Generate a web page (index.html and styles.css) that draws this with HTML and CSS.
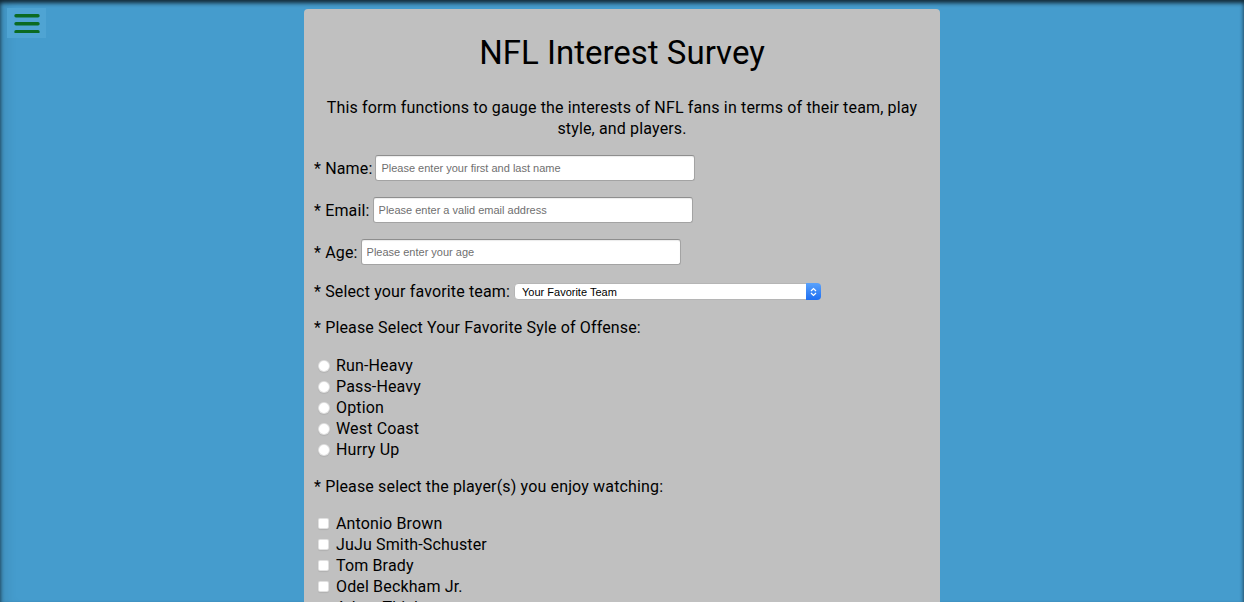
FILE: index.html
```html
<!DOCTYPE html>
<html lang="en">
<head>
<meta charset="utf-8">
<title>NFL Interest Survey</title>
<link rel="stylesheet" href="styles.css">
</head>
<body>
<button class="menu-btn" aria-label="Menu">
  <svg width="26" height="20" viewBox="0 0 26 20">
    <path d="M2 2.7H24M2 10.7H24M2 18.7H24" stroke="#0b6a22" stroke-width="3.4" stroke-linecap="round"/>
  </svg>
</button>
<main class="card">
  <h1 class="title">NFL Interest Survey</h1>
  <p class="desc">This form functions to gauge the interests of NFL fans in terms of their team, play style, and players.</p>
  <form class="survey">
    <div class="row"><label for="name">* Name:</label><input class="text-input" id="name" type="text" placeholder="Please enter your first and last name"></div>
    <div class="row"><label for="email">* Email:</label><input class="text-input" id="email" type="email" placeholder="Please enter a valid email address"></div>
    <div class="row"><label for="age">* Age:</label><input class="text-input" id="age" type="number" placeholder="Please enter your age"></div>
    <div class="row row-select"><label for="team">* Select your favorite team:</label>
      <span class="select-wrap">
        <select id="team" class="select"><option>Your Favorite Team</option></select>
        <span class="select-arrow"><svg width="7" height="10" viewBox="0 0 7 10"><path d="M1 4L3.5 1.5L6 4M1 6L3.5 8.5L6 6" fill="none" stroke="#fff" stroke-width="1.2"/></svg></span>
      </span>
    </div>
    <p class="question">* Please Select Your Favorite Syle of Offense:</p>
    <ul class="options">
      <li><input class="radio" type="radio" name="offense" id="o1"><label for="o1">Run-Heavy</label></li>
      <li><input class="radio" type="radio" name="offense" id="o2"><label for="o2">Pass-Heavy</label></li>
      <li><input class="radio" type="radio" name="offense" id="o3"><label for="o3">Option</label></li>
      <li><input class="radio" type="radio" name="offense" id="o4"><label for="o4">West Coast</label></li>
      <li><input class="radio" type="radio" name="offense" id="o5"><label for="o5">Hurry Up</label></li>
    </ul>
    <p class="question question-players">* Please select the player(s) you enjoy watching:</p>
    <ul class="options options-players">
      <li><input class="check" type="checkbox" id="p1"><label for="p1">Antonio Brown</label></li>
      <li><input class="check" type="checkbox" id="p2"><label for="p2">JuJu Smith-Schuster</label></li>
      <li><input class="check" type="checkbox" id="p3"><label for="p3">Tom Brady</label></li>
      <li><input class="check" type="checkbox" id="p4"><label for="p4">Odel Beckham Jr.</label></li>
      <li><input class="check" type="checkbox" id="p5"><label for="p5">Adam Thielen</label></li>
      <li><input class="check" type="checkbox" id="p6"><label for="p6">Todd Gurley</label></li>
    </ul>
  </form>
</main>
</body>
</html>
```
FILE: styles.css
```css
* { box-sizing: border-box; }
html, body { height: 100%; }
body {
  margin: 0;
  background: #459ccd;
  box-shadow: inset 0 3px 4px rgba(0,0,0,0.75), inset 14px 0 14px -10px rgba(0,0,0,0.12);
  font-family: Roboto, "Liberation Sans", sans-serif;
  color: #000;
  overflow: hidden;
}
.menu-btn {
  position: fixed;
  left: 7px;
  top: 8px;
  width: 39px;
  height: 30px;
  border: 0;
  padding: 0;
  background: #4fa4d3;
  display: flex;
  align-items: center;
  justify-content: center;
}
.menu-btn svg { display: block; }
.card {
  width: 636px;
  margin: 9px auto 0;
  background: #c0c0c0;
  border-radius: 4px;
  padding: 0 10px 40px;
  min-height: 700px;
}
.title {
  margin: 0;
  padding-top: 24px;
  font-size: 33px;
  line-height: 40px;
  font-weight: 400;
  text-align: center;
}
.desc {
  margin: 24px 0 0;
  padding: 0 8px;
  font-size: 16px;
  line-height: 21px;
  letter-spacing: 0.15px;
  text-align: center;
}
.survey { font-size: 16px; line-height: 21px; letter-spacing: 0.15px; }
.row {
  display: flex;
  align-items: center;
  height: 26px;
  margin-top: 16px;
}
.row label { margin-right: 3px; }
.text-input {
  width: 320px;
  height: 26px;
  border: 1px solid #a3a3a3;
  border-top-color: #8e8e8e;
  border-radius: 3px;
  background: #fff;
  box-shadow: inset 0 1px 1px rgba(0,0,0,0.08);
  padding: 0 5px;
  font-family: "Liberation Sans", Arial, sans-serif;
  font-size: 11px;
  letter-spacing: 0;
  -moz-appearance: textfield;
}
.text-input::-webkit-outer-spin-button,
.text-input::-webkit-inner-spin-button { -webkit-appearance: none; margin: 0; }
.text-input::placeholder { color: #6f6f6f; }
.row-select { height: 21px; }
.row-select label { margin-right: 4px; }
.select-wrap { position: relative; display: inline-block; width: 307px; height: 17px; }
.select {
  -webkit-appearance: none;
  appearance: none;
  width: 100%;
  height: 17px;
  border: 1px solid #b5b5b5;
  border-radius: 4px;
  background: #fff;
  padding: 0 0 0 7px;
  font-family: "Liberation Sans", Arial, sans-serif;
  font-size: 11px;
  letter-spacing: 0;
  color: #000;
  display: block;
}
.select-arrow {
  position: absolute;
  right: 0;
  top: 0;
  width: 15px;
  height: 17px;
  background: linear-gradient(#5aa2fb, #1f6ff2);
  border-radius: 0 4px 4px 0;
  display: flex;
  align-items: center;
  justify-content: center;
}
.question { margin: 15px 0 0; }
.question-players { margin-top: 16px; }
.options { list-style: none; margin: 17px 0 0; padding: 0; }
.options-players { margin-top: 16px; }
.options li { display: flex; align-items: center; height: 21px; }
.radio, .check {
  -webkit-appearance: none;
  appearance: none;
  margin: 0 6px 0 4px;
  background: #fff;
  border: 1px solid rgba(0,0,0,0.12);
  box-shadow: 0 1px 1px rgba(0,0,0,0.08);
  flex: none;
}
.radio { width: 12px; height: 12px; border-radius: 50%; }
.check { width: 11px; height: 11px; border-radius: 2px; margin-left: 4px; margin-right: 7px; }
```
